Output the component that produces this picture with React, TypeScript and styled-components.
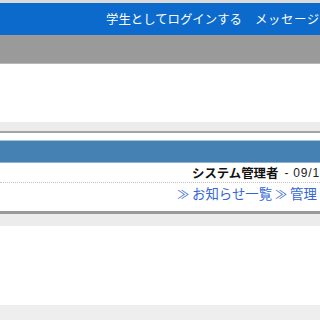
import React from "react";
import styled, { createGlobalStyle } from "styled-components";

const Global = createGlobalStyle`
  html, body {
    margin: 0;
    padding: 0;
    background: #ffffff;
    overflow: hidden;
  }
  body {
    font-family: "Noto Sans CJK JP", "DejaVu Sans", sans-serif;
  }
`;

const Page = styled.div`
  width: 320px;
  height: 320px;
  overflow: hidden;
  display: flex;
  flex-direction: column;
`;

const TopBar = styled.div`
  height: 32px;
  border-top: 3px solid #dadada;
  background: #0b6acb;
  display: flex;
  align-items: center;
  padding-left: 106px;
  white-space: nowrap;
  overflow: hidden;
`;

const TopLink = styled.span<{ $spacing?: number }>`
  color: #ffffff;
  font-size: 12.4px;
  letter-spacing: ${(p) => p.$spacing ?? 0}px;
  margin-right: 13px;
  line-height: 1;
`;

const SubBar = styled.div`
  height: 28px;
  background: #9a9a9a;
  border-bottom: 1px solid #b8b8b8;
`;

const Spacer = styled.div<{ $h: number }>`
  height: ${(p) => p.$h}px;
  flex-shrink: 0;
`;

const Band = styled.div<{ $line: string; $lineH: number; $h: number; $top?: boolean }>`
  height: ${(p) => p.$h}px;
  background: #ececec;
  ${(p) =>
    p.$top
      ? `border-top: ${p.$lineH}px solid ${p.$line};`
      : `border-bottom: ${p.$lineH}px solid ${p.$line};`}
  flex-shrink: 0;
`;

const Box = styled.div`
  display: flex;
  flex-direction: column;
`;

const BoxHeader = styled.div`
  height: 21px;
  background: #4681b4;
  border-top: 1px solid #a9c3da;
  border-bottom: 1px solid #8fb0cc;
`;

const Row = styled.div<{ $dotted?: boolean; $left: number }>`
  display: flex;
  align-items: center;
  white-space: nowrap;
  overflow: hidden;
  padding-left: ${(p) => p.$left}px;
  height: 19px;
  ${(p) => (p.$dotted ? "border-bottom: 1px dotted #c4c4c4;" : "")}
`;

const Author = styled.span`
  font-size: 12.4px;
  font-weight: bold;
  color: #111111;
`;

const Date = styled.span`
  font-family: "Liberation Sans", Arial, sans-serif;
  font-size: 12px;
  color: #222222;
  margin-left: 6px;
  letter-spacing: 0.8px;
`;

const NavLink = styled.a`
  color: #3467d4;
  font-size: 13.4px;
  text-decoration: none;
  margin-right: 3px;
`;

const Arrow = styled.span`
  font-size: 12px;
  margin-right: 3px;
`;

const Footer = styled.div`
  flex: 1;
  background: #eeeeee;
`;

export default function App() {
  return (
    <Page>
      <Global />
      <TopBar>
        <TopLink>学生としてログインする</TopLink>
        <TopLink $spacing={0.6}>メッセージ</TopLink>
      </TopBar>
      <SubBar />
      <Spacer $h={58} />
      <Band $h={9} $line="#a4a4a4" $lineH={2} />
      <Spacer $h={7} />
      <Box>
        <BoxHeader />
        <Row $dotted $left={192}>
          <Author>システム管理者</Author>
          <Date>- 09/1</Date>
        </Row>
        <Row $left={177}>
          <NavLink>
            <Arrow>≫</Arrow>お知らせ一覧
          </NavLink>
          <NavLink>
            <Arrow>≫</Arrow>管理
          </NavLink>
        </Row>
      </Box>
      <Spacer $h={9} />
      <Band $h={12} $line="#9a9a9a" $lineH={3} $top />
      <Spacer $h={79} />
      <Footer />
    </Page>
  );
}
